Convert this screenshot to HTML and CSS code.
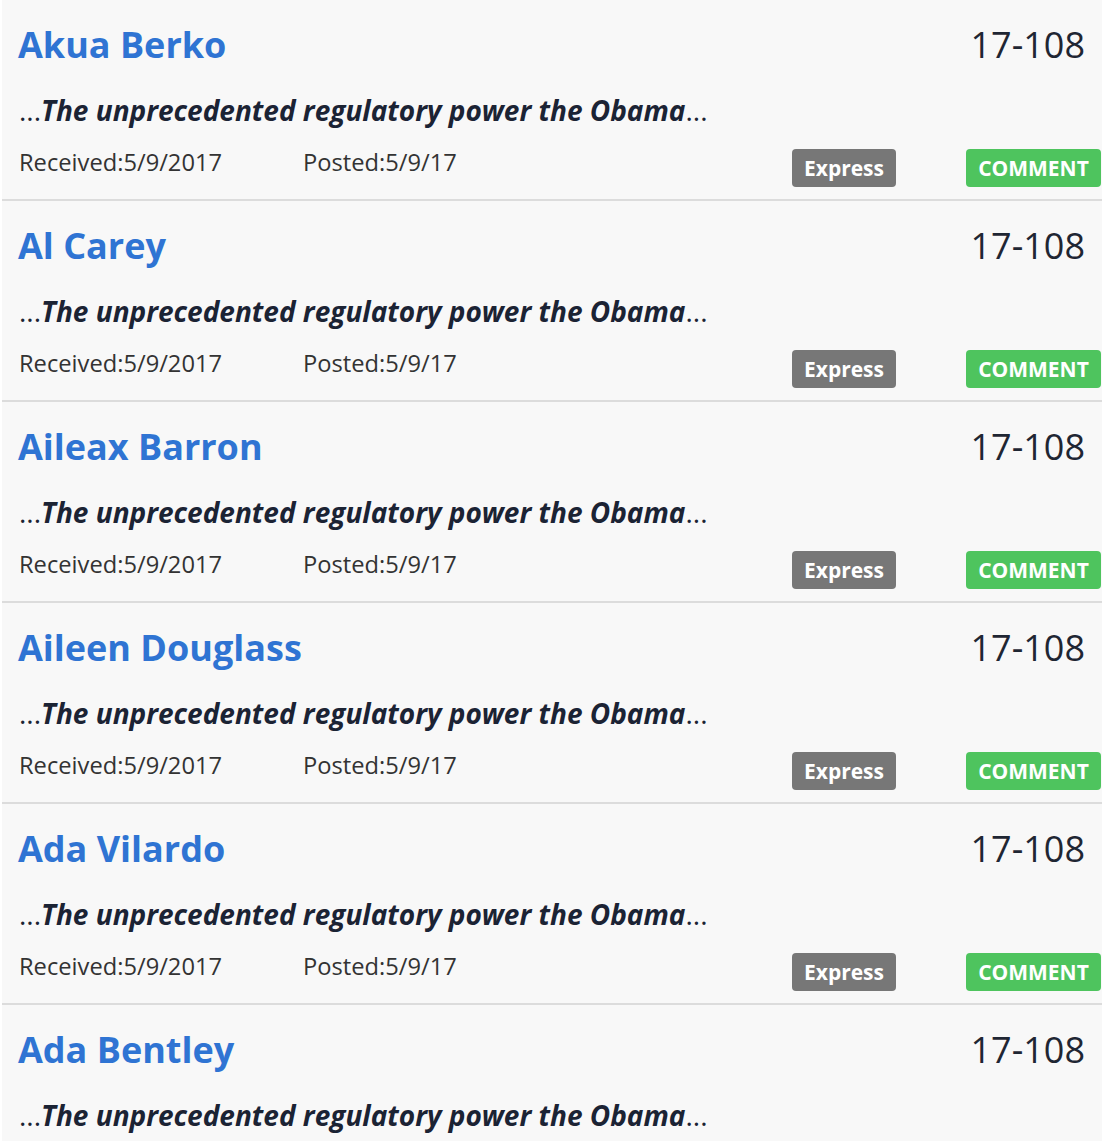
FILE: index.html
```html
<!DOCTYPE html>
<html>
<head>
<meta charset="utf-8">
<link rel="stylesheet" href="styles.css">
</head>
<body>
<div class="list">
  <div class="item">
    <div class="head"><a class="name">Akua Berko</a><span class="docket">17-108</span></div>
    <p class="excerpt">...<b>The unprecedented regulatory power the Obama</b>...</p>
    <div class="meta"><span class="received">Received:5/9/2017</span><span class="posted">Posted:5/9/17</span><span class="badge express">Express</span><span class="badge comment">COMMENT</span></div>
  </div>
  <div class="item">
    <div class="head"><a class="name">Al Carey</a><span class="docket">17-108</span></div>
    <p class="excerpt">...<b>The unprecedented regulatory power the Obama</b>...</p>
    <div class="meta"><span class="received">Received:5/9/2017</span><span class="posted">Posted:5/9/17</span><span class="badge express">Express</span><span class="badge comment">COMMENT</span></div>
  </div>
  <div class="item">
    <div class="head"><a class="name">Aileax Barron</a><span class="docket">17-108</span></div>
    <p class="excerpt">...<b>The unprecedented regulatory power the Obama</b>...</p>
    <div class="meta"><span class="received">Received:5/9/2017</span><span class="posted">Posted:5/9/17</span><span class="badge express">Express</span><span class="badge comment">COMMENT</span></div>
  </div>
  <div class="item">
    <div class="head"><a class="name">Aileen Douglass</a><span class="docket">17-108</span></div>
    <p class="excerpt">...<b>The unprecedented regulatory power the Obama</b>...</p>
    <div class="meta"><span class="received">Received:5/9/2017</span><span class="posted">Posted:5/9/17</span><span class="badge express">Express</span><span class="badge comment">COMMENT</span></div>
  </div>
  <div class="item">
    <div class="head"><a class="name">Ada Vilardo</a><span class="docket">17-108</span></div>
    <p class="excerpt">...<b>The unprecedented regulatory power the Obama</b>...</p>
    <div class="meta"><span class="received">Received:5/9/2017</span><span class="posted">Posted:5/9/17</span><span class="badge express">Express</span><span class="badge comment">COMMENT</span></div>
  </div>
  <div class="item">
    <div class="head"><a class="name">Ada Bentley</a><span class="docket">17-108</span></div>
    <p class="excerpt">...<b>The unprecedented regulatory power the Obama</b>...</p>
    <div class="meta"><span class="received">Received:5/9/2017</span><span class="posted">Posted:5/9/17</span><span class="badge express">Express</span><span class="badge comment">COMMENT</span></div>
  </div>
</div>
</body>
</html>
```

FILE: styles.css
```css
html, body {
  margin: 0;
  padding: 0;
  background: #ffffff;
}
body {
  font-family: "Open Sans", "Liberation Sans", sans-serif;
  color: #333;
}
.list {
  display: flex;
  flex-direction: column;
  padding-left: 2px;
  width: 1100px;
}
.item {
  background: #f8f8f8;
  border-bottom: 2px solid #dcdcdc;
  height: 201px;
  flex-shrink: 0;
  padding: 23px 0 0 17px;
  box-sizing: border-box;
  display: flex;
  flex-direction: column;
}
.head {
  display: flex;
  justify-content: space-between;
  align-items: baseline;
  padding-right: 17px;
  height: 44px;
}
.name {
  font-size: 36px;
  font-weight: 700;
  line-height: 44px;
  color: #2f74d3;
  text-decoration: none;
  margin-left: -1px;
}
.docket {
  font-size: 36px;
  font-weight: 400;
  line-height: 44px;
  color: #1f2633;
}
.excerpt {
  margin: 25px 0 0 0;
  font-size: 28px;
  line-height: 36px;
  color: #1b2334;
}
.excerpt b {
  font-style: italic;
  font-weight: 700;
}
.meta {
  margin-top: 19px;
  display: flex;
  align-items: flex-start;
  padding-right: 1px;
  font-size: 23.7px;
  line-height: 30px;
  color: #333;
}
.received {
  width: 284px;
}
.posted {
  flex: 1;
}
.badge {
  margin-top: 2px;
  height: 38px;
  box-sizing: border-box;
  display: flex;
  align-items: center;
  justify-content: center;
  border-radius: 4px;
  color: #fff;
  font-weight: 700;
  font-size: 21px;
}
.express {
  width: 104px;
  background: #777777;
  margin-right: 70px;
}
.comment {
  width: 135px;
  background: #4ec45e;
}
```
